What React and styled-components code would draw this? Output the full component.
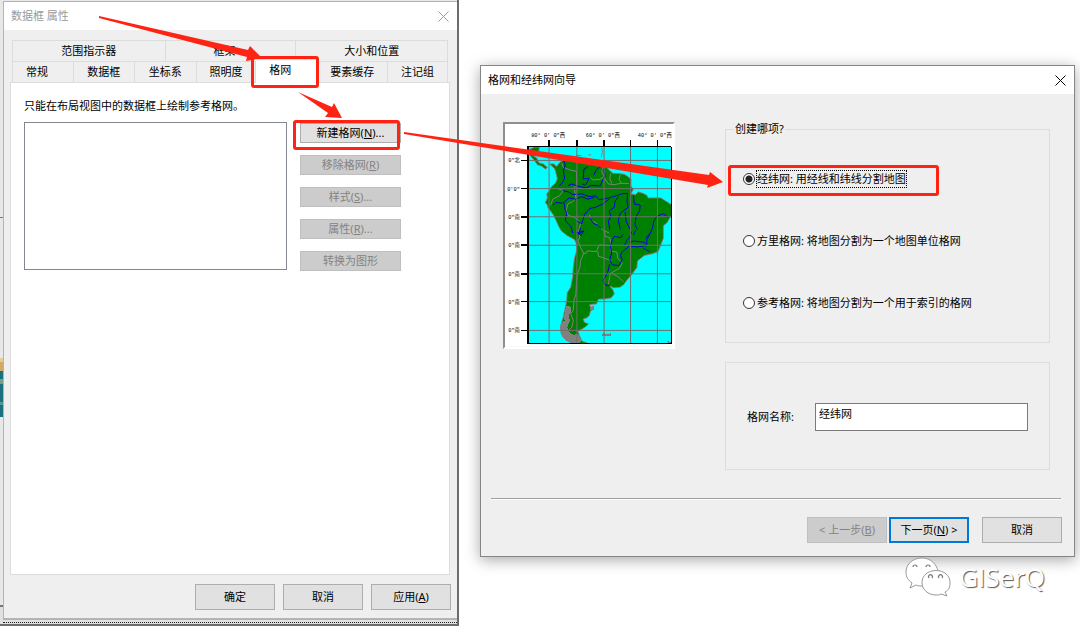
import React, { useState } from "react";
import styled, { createGlobalStyle, css } from "styled-components";

const frameTabs = [
  {
    columns: "153fr 131fr 152fr",
    tabs: [
      { label: "范围指示器" },
      { label: "框架", short: true },
      { label: "大小和位置" },
    ],
  },
  {
    columns: "61fr 61fr 62fr 60fr 61fr 71fr 60fr",
    tabs: [
      { label: "常规", short: true },
      { label: "数据框" },
      { label: "坐标系" },
      { label: "照明度" },
      { label: "格网", short: true },
      { label: "要素缓存" },
      { label: "注记组" },
    ],
  },
];

const gridKinds = [
  { id: "graticule", label: "经纬网: 用经线和纬线分割地图", marked: true },
  { id: "measured", label: "方里格网: 将地图分割为一个地图单位格网" },
  { id: "reference", label: "参考格网: 将地图分割为一个用于索引的格网" },
];

const meridians = [163, 247, 329, 409, 490];
const parallels = [137, 222, 307, 393, 479, 563, 650];

const CloseIcon = () => (
  <svg width="11" height="11" viewBox="0 0 11 11" aria-hidden="true">
    <path d="M.5.5l10 10M10.5.5l-10 10" stroke="currentColor" fill="none" />
  </svg>
);

const SouthAmerica = () => (
  <MapDrawing viewBox="30 27 507 672" role="img" aria-label="经纬网">
    <clipPath id="ocean">
      <rect x="99" y="95" width="433" height="595" />
    </clipPath>
    <rect x="30" y="27" width="507" height="672" fill="#fff" />
    <g fontSize="16" fill="#000">
      <text x="109" y="67">80° 0' 0"西</text>
      <text x="274" y="67">60° 0' 0"西</text>
      <text x="431" y="67">40° 0' 0"西</text>
      {parallels.map((y, i) => (
        <text key={y} x="75" y={y + 6} textAnchor="end">
          {i === 0 ? '0"北' : i === 1 ? "0'0\"" : '0"南'}
        </text>
      ))}
    </g>
    <g shapeRendering="crispEdges" strokeLinejoin="round" clipPath="url(#ocean)">
      <rect x="99" y="95" width="433" height="595" fill="#0ff" />
      <path
        d="M104 104L118 97 134 97 132 108 120 113 114 122 126 130 132 144 146 148 158 158 152 163 140 154 128 150 118 136 106 122z"
        fill="#008000"
        stroke="#808080"
        strokeWidth="3"
      />
      <path
        d="M165 148L176 147 186 155 196 142 206 136 222 126 232 132 250 128 265 133 290 137 306 138 320 148 334 154 342 164 356 176 372 176 390 179 402 186 410 194 410 214 417 224 410 238 424 240 432 232 446 236 458 242 462 250 480 250 500 250 516 260 531 270 538 275 538 304 528 308 520 324 508 334 508 372 500 392 492 412 476 418 450 424 430 440 428 460 412 482 398 498 388 512 376 520 358 521 346 516 356 528 360 540 350 552 332 555 312 556 306 570 286 572 290 582 296 586 288 592 284 606 276 612 266 616 270 626 282 630 272 640 262 646 250 652 254 664 262 682 284 690 235 690 215 680 200 660 197 640 205 612 212 582 216 560 218 536 228 520 234 490 236 460 240 430 246 410 246 390 240 376 218 364 200 350 192 336 184 318 176 302 168 290 160 280 158 272 152 264 158 250 156 238 164 228 170 216 182 206 188 192 184 176 180 162z"
        fill="#008000"
        stroke="#808080"
        strokeWidth="3"
      />
      <path d="M213 578L227 576 230 592 222 606 226 622 218 640 224 654 236 664 250 660 262 682 250 690 232 690 212 680 200 664 196 644 200 626 210 620 204 606 212 596zM284 572L290 580 300 574 298 588 288 588zM321 661l8-3 6 3 14-2 2 6-12 3-8-2-8 2zM514 681l10 1 8 5-6 2z" fill="#808080" />
      <g fill="none" stroke="#808080" strokeWidth="3">
        <path d="M201 145L206 158 228 166 246 170 246 212 234 222M168 272L174 254 194 244 206 228 190 222M214 288L220 268 234 262 244 250 240 226M214 288L222 304 240 308 252 320 258 328 252 350 256 368 250 380M284 300L290 318 306 326 324 346 344 356M250 380L266 416 274 418 278 410 306 412 314 392 346 394" />
        <path d="M326 156L322 170 330 186 316 194 296 196 288 190M330 190L342 208 360 210 380 206 404 206M350 176L346 190 352 206M378 180L374 194 382 206M330 348L332 366 346 370 350 386 348 410 368 414 370 432 384 446 376 462 348 478 342 510M310 412L312 426 330 432 352 440M352 478L372 488 388 504M268 416L258 440 256 460 248 480 246 504 244 540 238 560 236 590 228 600 236 620 232 640 220 652M322 98L324 112 320 128M244 122h18M282 120h8" />
      </g>
      <g fill="none" stroke="#0000d8" strokeWidth="3">
        <path d="M206 136L212 150 206 168 210 190 202 206 194 214M280 156L268 164 266 192 284 192 272 212 264 208M318 154L304 168 298 182M326 162L332 184 322 202 318 214 290 212 276 220 248 214 230 208 220 214" />
        <path d="M204 228L222 232 234 240 262 238 284 246 304 244 314 256 342 250 366 244 382 238 398 236M174 272L184 264 204 266 224 250 242 254 262 246 280 254 300 248M208 264L212 288 216 296 212 318 230 338 234 356M258 340L252 360 264 350M244 318L262 328 270 300 286 282 304 278 326 268 346 252M286 310L298 328 310 332 320 342M346 346L342 320 350 306 344 290 360 278 362 260 372 248M400 236L398 262 402 278 378 296 372 318 378 346M392 292L396 322 408 346M418 244L420 268 438 272 436 290 426 306 422 330 430 346M490 304L480 318 474 344 460 374M490 304L508 298 524 310" />
        <path d="M354 376L360 366 380 370 386 360M390 394L398 378 406 370 412 352M354 376L348 396 352 416 346 436 354 452 374 454 384 436 378 424 384 412 400 400 406 392M346 450L340 474 326 500 332 512 346 516M406 384L420 380 450 384 458 394 428 398 410 396M458 394L458 368 472 352M448 402L466 412M424 348L418 362M244 356L268 350 258 364 248 354" />
      </g>
      <g stroke="#707070" strokeWidth="3">
        {meridians.map((x) => (
          <path key={x} d={`M${x} 95V690`} />
        ))}
        {parallels.map((y) => (
          <path key={y} d={`M99 ${y}H532`} />
        ))}
      </g>
    </g>
    <g stroke="#000" strokeWidth="5" shapeRendering="crispEdges">
      {meridians.map((x) => (
        <path key={x} d={`M${x} 75V94`} />
      ))}
      {parallels.map((y) => (
        <path key={y} d={`M78 ${y}H99`} />
      ))}
      <path d="M96 95H532M99 93V692" />
      <path d="M99 690H532V95" fill="none" strokeWidth="3" />
    </g>
  </MapDrawing>
);

const WechatMark = () => (
  <svg width="46" height="40" viewBox="0 0 46 40" aria-hidden="true">
    <g fill="#fff" stroke="#999" strokeWidth="1">
      <path d="M17 1C8 1 1 7 1 15c0 5 2 8 6 11l-2 5 6-3c2 1 4 1 7 1h3C38 27 34 14 31 9 28 4 23 1 17 1z" />
      <path d="M31 13.500c-8 0-14 5-14 12s6 12.500 14 12.500c2 0 4 0 5-1l6 2-2-4c4-2 5-5 5-9.500 0-7-6-12-14-12z" />
    </g>
    <g fill="none" stroke="#777" strokeWidth="1.2">
      <path d="M8 10a2 2 0 1 1 4 0M21 10a2 2 0 1 1 4 0M24 21a2 2 0 1 1 3 0M34 21a2 2 0 1 1 3 0" />
    </g>
  </svg>
);

const App = () => {
  const [kind, setKind] = useState("graticule");
  const [name, setName] = useState("经纬网");

  return (
    <Screen>
      <GlobalStyle />

      <Backdrop>
        <FrameDialog>
          <TitleBar $inactive>
            <h1>数据框 属性</h1>
            <CloseButton aria-label="关闭">
              <CloseIcon />
            </CloseButton>
          </TitleBar>

          <Tabs role="tablist">
            {frameTabs.map(({ columns, tabs }) => (
              <TabRow key={columns} $columns={columns}>
                {tabs.map(({ label, short }) => (
                  <Tab
                    key={label}
                    role="tab"
                    aria-selected={label === "格网"}
                    $short={short}
                    $selected={label === "格网"}
                  >
                    {label}
                  </Tab>
                ))}
              </TabRow>
            ))}
          </Tabs>

          <TabPanel role="tabpanel">
            <p>只能在布局视图中的数据框上绘制参考格网。</p>
            <GridArea>
              <GridList aria-label="格网" />
              <SideButtons>
                <SideButton $marked>
                  新建格网(<u>N</u>)...
                </SideButton>
                <SideButton disabled>
                  移除格网(<u>R</u>)
                </SideButton>
                <SideButton disabled>
                  样式(<u>S</u>)...
                </SideButton>
                <SideButton disabled>
                  属性(<u>R</u>)...
                </SideButton>
                <SideButton disabled>转换为图形</SideButton>
              </SideButtons>
            </GridArea>
          </TabPanel>

          <FrameFooter>
            <Button>确定</Button>
            <Button>取消</Button>
            <Button>
              应用(<u>A</u>)
            </Button>
          </FrameFooter>
        </FrameDialog>
        <DottedEdge />
      </Backdrop>

      <WizardColumn>
        <WizardDialog>
          <TitleBar>
            <h1>格网和经纬网向导</h1>
            <CloseButton aria-label="关闭">
              <CloseIcon />
            </CloseButton>
          </TitleBar>

          <WizardBody>
            <MapFrame>
              <SouthAmerica />
            </MapFrame>
            <div>
              <KindGroup>
                <legend>创建哪项?</legend>
                <Options>
                  {gridKinds.map(({ id, label, marked }) => (
                    <Option key={id} $marked={marked}>
                      <input
                        type="radio"
                        name="kind"
                        checked={kind === id}
                        onChange={() => setKind(id)}
                      />
                      <span>{label}</span>
                    </Option>
                  ))}
                </Options>
              </KindGroup>

              <NameGroup>
                <label htmlFor="grid-name">格网名称:</label>
                <NameInput
                  id="grid-name"
                  value={name}
                  onChange={(e) => setName(e.target.value)}
                />
              </NameGroup>
            </div>
          </WizardBody>

          <Separator />

          <WizardFooter>
            <StepButtons>
              <Button disabled>
                &lt; 上一步(<u>B</u>)
              </Button>
              <Button $primary>
                下一页(<u>N</u>) &gt;
              </Button>
            </StepButtons>
            <Button>取消</Button>
          </WizardFooter>
        </WizardDialog>

        <Watermark>
          <WechatMark />
          <span>GISerQ</span>
        </Watermark>
      </WizardColumn>

      <Arrows viewBox="0 0 1080 626" preserveAspectRatio="none" aria-hidden="true">
        <path d="M99 16L248 50 250 46 262 58 246 61 247 57 99 18z" />
        <path d="M298 92L332 107 334 103 342 118 325 117 328 113z" />
        <path d="M404 132L709 175 710 172 723 182 707 188 708 185 404 134z" />
      </Arrows>
    </Screen>
  );
};

const GlobalStyle = createGlobalStyle`
  * {
    box-sizing: border-box;
  }

  body {
    margin: 0;
    background: #fff;
  }

  body, button, input {
    font-family: "Noto Sans", "Noto Sans CJK SC", sans-serif;
    font-size: 11px;
    line-height: 16px;
    color: #000;
  }

  h1, p {
    margin: 0;
    font-size: 11px;
    font-weight: 400;
  }
`;

const redBox = css`
  content: "";
  position: absolute;
  border: 3px solid #ff2314;
  border-radius: 3px;
  pointer-events: none;
  z-index: 1;
`;

const Screen = styled.main`
  position: relative;
  display: grid;
  grid-template-columns: 459fr 621fr;
  min-height: 100vh;
`;

const Backdrop = styled.div`
  display: flex;
  flex-direction: column;
  padding: 1px 0 0 3px;
  border-right: 2px solid #6c6c6c;
  border-bottom: 2px solid #6c6c6c;
  background: linear-gradient(
    #e8e8e8 217px,
    #777 217px 218px,
    #e8e8e8 218px 358px,
    #e0cf94 358px 362px,
    #d0a868 362px 371px,
    #1d7080 371px 379px,
    #72a08c 379px 384px,
    #1d7080 384px 402px,
    #559a8e 402px 405px,
    #1d7080 405px 417px,
    #e8e8e8 417px 605px,
    #777 605px 607px,
    #e0e0e0 607px
  );
`;

const DottedEdge = styled.div`
  margin: 2px 0 1px;
  border-top: 1px dotted #222;
`;

const FrameDialog = styled.section`
  flex: 1;
  display: flex;
  flex-direction: column;
  border: 1px solid #b4b4b4;
  border-width: 1px 0 2px 1px;
  background: #efefef;
`;

const TitleBar = styled.header`
  display: flex;
  justify-content: space-between;
  align-items: center;
  height: 28px;
  padding: 0 8px 0 7px;
  background: #fff;
  color: ${({ $inactive }) => ($inactive ? "#999" : "#000")};
`;

const CloseButton = styled.button`
  display: flex;
  padding: 0;
  border: 0;
  background: none;
  color: inherit;
`;

const Tabs = styled.div`
  padding: 10px 9px 0 8px;
`;

const TabRow = styled.div`
  display: grid;
  grid-template-columns: ${({ $columns }) => $columns};
  height: 21px;
  border-left: 1px solid #dcdcdc;
`;

const Tab = styled.button`
  position: relative;
  height: 21px;
  padding: 0 ${({ $short }) => ($short ? "12px" : 0)} 0 0;
  border: 1px solid #dcdcdc;
  border-width: 1px 1px 0 0;
  background: #efefef;
  white-space: nowrap;

  ${({ $selected }) =>
    $selected &&
    css`
      height: 24px;
      margin-top: -2px;
      padding-bottom: 4px;
      background: #fff;

      &::after {
        ${redBox}
        inset: -4px -3px -5px -5px;
      }
    `}
`;

const TabPanel = styled.div`
  flex: 1;
  margin: 0 7px 0 6px;
  padding: 15px 13px;
  border: 1px solid #dcdcdc;
  background: #fff;
`;

const GridArea = styled.div`
  display: flex;
  gap: 13px;
  margin-top: 8px;
  padding-right: 35px;
`;

const GridList = styled.div`
  flex: 1;
  height: 148px;
  border: 1px solid #828790;
`;

const SideButtons = styled.div`
  display: flex;
  flex-direction: column;
  gap: 12px;
  width: 101px;
  padding-top: 1px;
`;

const Button = styled.button`
  position: relative;
  width: 80px;
  height: 26px;
  padding: 0;
  border: ${({ $primary }) =>
    $primary ? "2px solid #0078d7" : "1px solid #adadad"};
  background: #e1e1e1;
  white-space: nowrap;

  &:disabled {
    border-color: #bfbfbf;
    background: #ccc;
    color: #838383;
  }
`;

const SideButton = styled(Button)`
  width: 100%;
  height: 20px;

  ${({ $marked }) =>
    $marked &&
    css`
      &::after {
        ${redBox}
        inset: -4px 0 -8px -8px;
      }
    `}
`;

const FrameFooter = styled.footer`
  display: flex;
  justify-content: flex-end;
  gap: 8px;
  padding: 9px 6px 8px;
`;

const WizardColumn = styled.div`
  min-width: 0;
  padding: 65px 5px 0 21px;
`;

const WizardDialog = styled.section`
  border: 1px solid #858585;
  background: #efefef;
  box-shadow: 0 3px 14px rgba(0, 0, 0, 0.35);
`;

const WizardBody = styled.div`
  display: grid;
  grid-template-columns: 172px 1fr;
  gap: 50px;
  align-items: start;
  padding: 27px 24px 0 22px;
`;

const MapFrame = styled.div`
  margin-top: 1px;
  border: 2px solid;
  border-color: #8f8f8f #fff #fff #8f8f8f;
`;

const MapDrawing = styled.svg`
  display: block;
  width: 100%;
  font-family: "Liberation Mono", "Noto Sans CJK SC", monospace;
`;

const KindGroup = styled.fieldset`
  margin: 0 0 19px;
  padding: 0 8px 30px;
  border: 1px solid #dcdcdc;

  legend {
    padding: 0 1px;
  }
`;

const Options = styled.div`
  display: flex;
  flex-direction: column;
  align-items: flex-start;
  gap: 44px;
  padding: 33px 0 0 9px;
`;

const Option = styled.label`
  position: relative;
  display: flex;
  align-items: center;
  gap: 2px;
  height: 18px;

  input {
    appearance: none;
    width: 12px;
    height: 12px;
    margin: 0;
    border: 1px solid #333;
    border-radius: 50%;
    background: #fff;
  }

  input:checked {
    background: radial-gradient(#222 3px, #fff 4px);
  }

  input:checked + span {
    outline: 1px dotted #000;
  }

  ${({ $marked }) =>
    $marked &&
    css`
      &::after {
        ${redBox}
        inset: -5px -33px -8px -15px;
      }
    `}
`;

const NameGroup = styled.div`
  display: flex;
  align-items: center;
  height: 108px;
  padding: 2px 21px 0;
  border: 1px solid #dcdcdc;

  label {
    width: 68px;
  }
`;

const NameInput = styled.input`
  flex: 1;
  min-width: 0;
  height: 28px;
  padding: 0 3px 8px;
  border: 1px solid #7a7a7a;
  background: #fff;
`;

const Separator = styled.hr`
  margin: 28px 13px 0 10px;
  border: 0;
  border-top: 1px solid #a0a0a0;
  border-bottom: 1px solid #fff;
`;

const WizardFooter = styled.footer`
  display: flex;
  justify-content: flex-end;
  gap: 13px;
  padding: 17px 12px 13px;
`;

const StepButtons = styled.div`
  display: flex;
  gap: 2px;
`;

const Watermark = styled.div`
  position: relative;
  display: flex;
  justify-content: flex-end;
  align-items: center;
  gap: 8px;
  padding-right: 30px;
  color: #fff;
  font-family: "Open Sans", sans-serif;
  font-size: 26px;
  line-height: 40px;
  text-shadow: 1px 1px 1px #555;
`;

const Arrows = styled.svg`
  position: absolute;
  top: 0;
  left: 0;
  width: 100%;
  height: 626px;
  fill: #ff2314;
  pointer-events: none;
`;

export default App;
